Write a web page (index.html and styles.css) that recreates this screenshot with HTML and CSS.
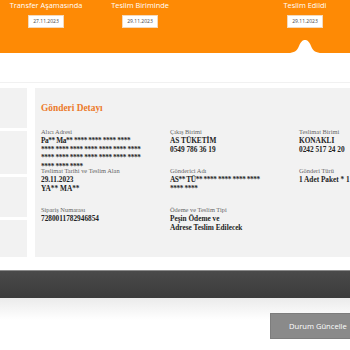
FILE: index.html
```html
<!DOCTYPE html>
<html lang="tr">
<head>
  <meta charset="UTF-8" />
  <meta name="viewport" content="width=device-width, initial-scale=1.0"/>
  <title>Gönderi Takip</title>
  <link rel="stylesheet" href="styles.css">
</head>
<body>
  <header class="track">
    <div class="step">
      <span class="step-name">Transfer Aşamasında</span>
      <span class="step-date">27.11.2023</span>
    </div>
    <div class="step">
      <span class="step-name">Teslim Biriminde</span>
      <span class="step-date">29.11.2023</span>
    </div>
    <div class="step"></div>
    <div class="step">
      <span class="step-name">Teslim Edildi</span>
      <span class="step-date">29.11.2023</span>
    </div>
    <!-- marker under the active step -->
    <svg class="bump" width="34" height="13" viewBox="0 0 34 13">
      <path d="M0 13 C6 13 9 11 11 6 C13 1 15 0 17 0 C19 0 21 1 23 6 C25 11 28 13 34 13 Z" fill="#fff"/>
    </svg>
  </header>

  <div class="spacer"></div>

  <div class="detail">
    <aside class="side">
      <div class="side-box b1"></div>
      <div class="side-box b2"></div>
      <div class="side-box b3"></div>
      <div class="side-box b4"></div>
    </aside>

    <section class="panel">
      <h2>Gönderi Detayı</h2>
      <div class="grid">
        <div class="cell">
          <div class="label">Alıcı Adresi</div>
          <div class="value mask">Pa** Ma** **** **** **** ****<br>**** **** **** **** **** **** ****<br>**** **** **** **** **** **** ****<br>**** **** ****</div>
        </div>
        <div class="cell">
          <div class="label">Çıkış Birimi</div>
          <div class="value">AS TÜKETİM<br>0549 786 36 19</div>
        </div>
        <div class="cell">
          <div class="label">Teslimat Birimi</div>
          <div class="value">KONAKLI<br>0242 517 24 20</div>
        </div>

        <div class="cell">
          <div class="label">Teslimat Tarihi ve Teslim Alan</div>
          <div class="value">29.11.2023<br>YA** MA**</div>
        </div>
        <div class="cell">
          <div class="label">Gönderici Adı</div>
          <div class="value mask">AS** TÜ** **** **** **** ****<br>**** ****</div>
        </div>
        <div class="cell">
          <div class="label">Gönderi Türü</div>
          <div class="value nowrap">1 Adet Paket * 1 Adet</div>
        </div>

        <div class="cell">
          <div class="label">Sipariş Numarası</div>
          <div class="value">7280011782946854</div>
        </div>
        <div class="cell">
          <div class="label">Ödeme ve Teslim Tipi</div>
          <div class="value">Peşin Ödeme ve<br>Adrese Teslim Edilecek</div>
        </div>
        <div class="cell"></div>
      </div>
    </section>
  </div>

  <div class="bar"></div>

  <div class="actions">
    <button class="button">Durum Güncelle</button>
  </div>
</body>
</html>
```

FILE: styles.css
```css
html, body {
  overflow: hidden;
}

body {
  margin: 0;
  background-color: #fff;
  font-family: "Liberation Serif", "Times New Roman", serif;
  width: 350px;
}

.track {
  position: relative;
  height: 53px;
  background-color: #fe8a05;
  display: grid;
  grid-template-columns: 92px 96px 72px 90px;
}

.step {
  display: flex;
  flex-direction: column;
  align-items: center;
}

.step-name {
  font-family: "Open Sans", sans-serif;
  font-size: 7.4px;
  line-height: 10px;
  color: #fff;
  white-space: nowrap;
}

.step-date {
  margin-top: 5px;
  width: 36px;
  height: 13px;
  box-sizing: border-box;
  background-color: #fff;
  border: 1px solid #f3d9bd;
  font-family: "Open Sans", sans-serif;
  font-size: 5px;
  line-height: 11px;
  text-align: center;
  color: #444;
}

.bump {
  position: absolute;
  left: 288px;
  top: 40px;
}

.spacer {
  height: 29px;
  border-bottom: 1px solid #f1f1f1;
  margin-bottom: 5px;
}

.detail {
  display: flex;
  height: 169px;
  overflow: hidden;
}

.side {
  width: 27px;
  display: flex;
  flex-direction: column;
  gap: 3px;
  flex-shrink: 0;
}

.side-box {
  background-color: #f2f2f2;
}

.b1 { height: 40px; }
.b2 { height: 43px; }
.b3 { height: 40px; }
.b4 { height: 37px; }

.panel {
  margin-left: 8px;
  width: 400px;
  flex-shrink: 0;
  background-color: #f2f2f2;
  padding: 14px 0 0 6px;
  box-sizing: border-box;
}

.panel h2 {
  margin: 0 0 13px;
  font-size: 9.4px;
  line-height: 12px;
  color: #ec7a2b;
}

.grid {
  display: grid;
  grid-template-columns: 129px 129px 129px;
  grid-auto-rows: 39px;
}

.label {
  font-size: 6.4px;
  line-height: 9px;
  color: #666;
  margin-bottom: 1px;
  white-space: nowrap;
}

.value {
  font-size: 7.3px;
  line-height: 8.6px;
  font-weight: bold;
  color: #222;
  white-space: nowrap;
}

.mask {
  letter-spacing: -0.4px;
}

.bar {
  margin-top: 13px;
  height: 28px;
  background: linear-gradient(#4a4a4a, #3b3b3b);
  border-top: 1px solid #8a8a8a;
  box-sizing: border-box;
}

.actions {
  height: 52px;
  background: linear-gradient(#ebebeb, #fff 22px);
  padding: 15px 0 0 270px;
  box-sizing: border-box;
}

.button {
  width: 95px;
  height: 26px;
  background-color: #8a8a8a;
  border: 1px solid #7d7d7d;
  color: #fff;
  font-family: "Open Sans", sans-serif;
  font-size: 7.6px;
  text-align: left;
  padding: 0 0 0 18px;
  cursor: pointer;
}

.button:hover {
  background-color: #777;
}
```
